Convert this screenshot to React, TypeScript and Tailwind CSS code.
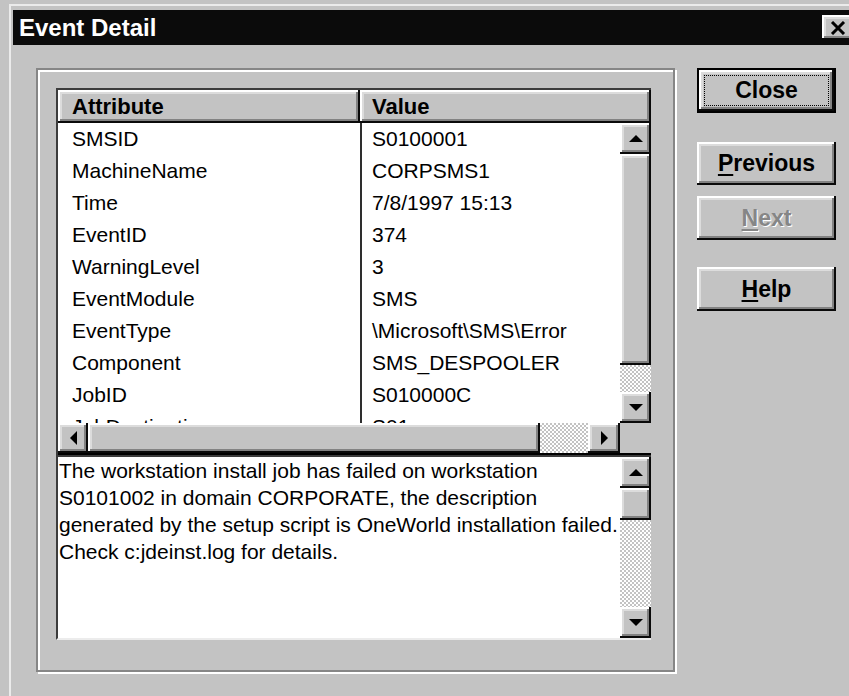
import React from "react";

// Win95 style bevels
const raised =
  "bg-[#c3c3c3] shadow-[inset_-2px_-2px_0_#0a0a0a,inset_2px_2px_0_#ffffff,inset_-4px_-4px_0_#828282,inset_4px_4px_0_#dcdcdc]";
const track =
  "bg-[image:repeating-conic-gradient(#c3c3c3_0%_25%,#ffffff_0%_50%)] bg-[length:4px_4px]";

const rows = [
	["SMSID", "S0100001"],
	["MachineName", "CORPSMS1"],
	["Time", "7/8/1997 15:13"],
	["EventID", "374"],
	["WarningLevel", "3"],
	["EventModule", "SMS"],
	["EventType", "\\Microsoft\\SMS\\Error"],
	["Component", "SMS_DESPOOLER"],
	["JobID", "S010000C"],
	["JobDestination", "S01"],
];

function Arrow({ dir }: { dir: "up" | "down" | "left" | "right" }) {
	const vertical = dir === "up" || dir === "down";
	const points = {
		up: "0,7 7,0 14,7",
		down: "0,0 14,0 7,7",
		left: "7,0 7,14 0,7",
		right: "0,0 0,14 7,7",
	}[dir];
	return (
		<svg
			width={vertical ? 14 : 7}
			height={vertical ? 7 : 14}
			viewBox={vertical ? "0 0 14 7" : "0 0 7 14"}
		>
			<polygon points={points} fill="#000" />
		</svg>
	);
}

function ArrowButton({
	dir,
	className,
}: {
	dir: "up" | "down" | "left" | "right";
	className: string;
}) {
	return (
		<div className={`flex items-center justify-center ${raised} ${className}`}>
			<Arrow dir={dir} />
		</div>
	);
}

function Underlined({ children }: { children: React.ReactNode }) {
	return (
		<span className="underline decoration-2 underline-offset-[3px]">
			{children}
		</span>
	);
}

export default function App() {
	return (
		<div className="w-[849px] h-[696px] overflow-hidden bg-[#c3c3c3] pt-[4px] pl-[9px] font-['Liberation_Sans',Arial,sans-serif] text-black">
			<div className="w-[856px] h-[700px] border-t-2 border-l-2 border-[#ebebeb] pt-[4px] pl-[2px]">
				{/* Title bar */}
				<div className="h-[35px] bg-[#0b0b0b] flex items-center justify-between pl-[6px]">
					<span className="text-white font-bold text-[24px] leading-none">
						Event Detail
					</span>
					<div
						className={`w-[33px] h-[25px] mr-[10px] flex items-center pl-[8px] ${raised}`}
					>
						<svg width="16" height="14" viewBox="0 0 16 14">
							<path
								d="M2 1 L14 13 M14 1 L2 13"
								stroke="#000"
								strokeWidth="3"
							/>
						</svg>
					</div>
				</div>

				<div className="flex pl-[23px] pt-[23px]">
					{/* Group frame */}
					<div className="w-[639px] h-[604px] border-2 border-[#868686] shadow-[inset_2px_2px_0_#ffffff,2px_2px_0_#ffffff] pl-[18px] pt-[18px]">
						{/* Attribute list */}
						<div className="w-[595px] h-[367px] border-t-2 border-l-2 border-[#3c3c3c] flex flex-col">
							<div className="h-[33px] flex font-bold text-[22px]">
								<div className={`w-[302px] h-full flex items-center pl-[14px] ${raised}`}>
									Attribute
								</div>
								<div className={`flex-1 h-full flex items-center pl-[12px] ${raised}`}>
									Value
								</div>
							</div>
							<div className="h-[300px] flex">
								<div className="w-[562px] h-full bg-white overflow-hidden text-[21px]">
									{rows.map(([name, value]) => (
										<div key={name} className="flex h-[32px] leading-[32px]">
											<div className="w-[302px] pl-[14px] whitespace-nowrap">
												{name}
											</div>
											<div className="flex-1 border-l-2 border-[#2e2e2e] pl-[10px] whitespace-nowrap">
												{value}
											</div>
										</div>
									))}
								</div>
								<div className="w-[31px] h-full flex flex-col">
									<ArrowButton dir="up" className="h-[31px]" />
									<div className={`h-[211px] ${raised}`} />
									<div className={`h-[27px] ${track}`} />
									<ArrowButton dir="down" className="h-[31px]" />
								</div>
							</div>
							<div className="h-[32px] flex border-b-2 border-black">
								<ArrowButton dir="left" className="w-[30px] h-full" />
								<div className={`w-[452px] h-full ${raised}`} />
								<div className={`w-[48px] h-full ${track}`} />
								<ArrowButton dir="right" className="w-[32px] h-full" />
								<div className="flex-1 h-full bg-[#c3c3c3]" />
							</div>
						</div>

						{/* Description text */}
						<div className="w-[595px] h-[185px] border-t-2 border-l-2 border-b-2 border-t-[#3c3c3c] border-l-[#3c3c3c] border-b-[#ececec] flex">
							<div className="w-[562px] h-full bg-white text-[21px] leading-[27px] pl-[1px] whitespace-nowrap overflow-hidden">
								The workstation install job has failed on workstation
								<br />
								S0101002 in domain CORPORATE, the description
								<br />
								generated by the setup script is OneWorld installation failed.
								<br />
								Check c:jdeinst.log for details.
							</div>
							<div className="w-[31px] h-full flex flex-col">
								<ArrowButton dir="up" className="h-[31px]" />
								<div className={`h-[32px] ${raised}`} />
								<div className={`flex-1 ${track}`} />
								<ArrowButton dir="down" className="h-[31px]" />
							</div>
						</div>
					</div>

					{/* Buttons */}
					<div className="ml-[22px] w-[139px] flex flex-col text-[23px] font-bold">
						<div className={`h-[45px] border-2 border-black p-[5px] ${raised}`}>
							<div className="h-full border border-dotted border-black flex items-center justify-center">
								Close
							</div>
						</div>
						<div className={`mt-[29px] h-[43px] flex items-center justify-center ${raised}`}>
							<span>
								<Underlined>P</Underlined>revious
							</span>
						</div>
						<div
							className={`mt-[11px] h-[44px] flex items-center justify-center text-[#868686] [text-shadow:1px_1px_0_#ffffff] ${raised}`}
						>
							<span>
								<Underlined>N</Underlined>ext
							</span>
						</div>
						<div className={`mt-[27px] h-[44px] flex items-center justify-center ${raised}`}>
							<span>
								<Underlined>H</Underlined>elp
							</span>
						</div>
					</div>
				</div>
			</div>
		</div>
	);
}
